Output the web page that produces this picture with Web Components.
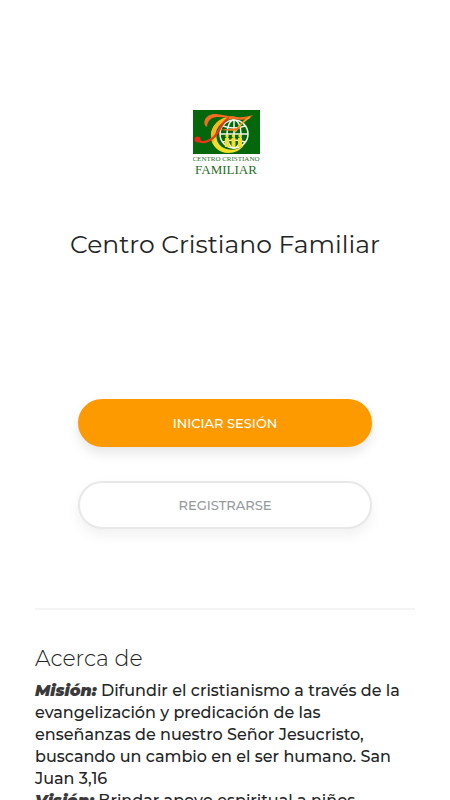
<!DOCTYPE html>
<html lang="es">
<head>
<meta charset="utf-8">
<meta name="viewport" content="width=device-width, initial-scale=1">
<title>Centro Cristiano Familiar</title>
<style>
body { margin: 0; background: #fff; color: #232526; font-family: Montserrat, Inter, "Open Sans", sans-serif; }
</style>
</head>
<body>
<welcome-page>
  <church-logo slot="logo"></church-logo>
  <span slot="title">Centro Cristiano Familiar</span>
  <pill-button slot="actions" variant="primary">INICIAR SESIÓN</pill-button>
  <pill-button slot="actions">REGISTRARSE</pill-button>
  <about-section>
    <span slot="heading">Acerca de</span>
    <about-entry label="Misión:">Difundir el cristianismo a través de la evangelización y predicación de las enseñanzas de nuestro Señor Jesucristo, buscando un cambio en el ser humano. San Juan 3,16</about-entry>
    <about-entry label="Visión:">Brindar apoyo espiritual a niños,</about-entry>
  </about-section>
</welcome-page>
<script>
const define = (name, html) => customElements.define(name, class extends HTMLElement {
  constructor() {
    super();
    this.attachShadow({ mode: "open" }).innerHTML = html;
  }
  connectedCallback() {
    const label = this.shadowRoot.querySelector("[data-label]");
    if (label) label.textContent = this.getAttribute("label");
  }
});

define("church-logo", `
<style>
:host { display: block; width: 67px; padding-left: 3px; }
svg { display: block; width: 100%; }
text { font-family: "Liberation Serif", serif; text-anchor: middle; fill: #1f701f; }
</style>
<svg viewBox="0 0 67 67" role="img" aria-label="Centro Cristiano Familiar">
  <rect width="67" height="44" fill="#04670b"/>
  <g fill="none" stroke="#f2f7ec" stroke-width="1.5">
    <circle cx="41" cy="24" r="14"/>
    <ellipse cx="41" cy="24" rx="7" ry="14"/>
    <path d="M41 10v28M27 24h28M30 16q11 4 22 0M30 32q11-4 22 0"/>
  </g>
  <path d="M43 7C29 5 18 14 18 26c0 10 8 17 17 17 7 0 13-3 16-8-6 5-14 6-20 3-13-6-9-27 12-31z" fill="#f4df28"/>
  <path d="M43 7C29 5 18 14 18 26c0 3 1 6 2 8 1-13 9-23 23-27z" fill="#fbb51c"/>
  <path d="M39 9C29 12 23 20 23 29c-2-9 4-18 16-20z" fill="#04670b"/>
  <g fill="#f8df22">
    <circle cx="34" cy="26" r="1.7"/><path d="M32 28h4v9h-4z"/>
    <circle cx="40.5" cy="26" r="1.7"/><path d="M38.500 28h4v9h-4z"/>
    <circle cx="47" cy="26" r="1.7"/><path d="M45 28h4v9h-4z"/>
  </g>
  <path d="M14 17C8 13 13 3 23 4c10 1 22 6 37 1-5 6-14 5-20 4C30 7 15 3 14 17z" fill="#f36b20"/>
  <path d="M36 8C29 11 27 21 21 27c-5 5-13 7-16 3" fill="none" stroke="#e63b19" stroke-width="2.4"/>
  <path d="M57 7C50 11 46 16 42 22" fill="none" stroke="#f9a51f" stroke-width="1.8"/>
  <path d="M28 20c7-2 14 0 20-4-2 6-11 5-20 4z" fill="#f47a20"/>
  <circle cx="4.500" cy="29.500" r="3" fill="#ed2419"/>
  <text x="33" y="51" font-size="7">CENTRO CRISTIANO</text>
  <text x="33" y="64" font-size="13">FAMILIAR</text>
</svg>`);

define("pill-button", `
<style>
:host { display: block; }
button {
  box-sizing: border-box; display: block; width: 100%; min-height: 48px; padding: 12px 24px;
  border: 2px solid #e8e8e8; border-radius: 24px; background: #fff; color: #969a9d;
  font: 500 13px/20px Montserrat, Inter, sans-serif; box-shadow: 0 6px 14px #0000000f; cursor: pointer;
}
:host([variant="primary"]) button {
  border-color: #fc9a00; background: #fc9a00; color: #fff; box-shadow: 0 6px 12px #0000001a;
}
</style>
<button type="button"><slot></slot></button>`);

define("about-entry", `
<style>
:host { display: block; font-size: 16px; line-height: 22px; font-weight: 500; }
em { font-weight: 900; color: #3a3a3a; }
</style>
<em data-label></em> <slot></slot>`);

define("about-section", `
<style>
:host { display: block; border-top: 2px solid #f4f4f5; padding: 34px 0 24px; }
h2 { margin: 0 0 6px; font-size: 22px; line-height: 30px; font-weight: 300; }
</style>
<h2><slot name="heading"></slot></h2>
<slot></slot>`);

define("welcome-page", `
<style>
:host { display: block; padding: 110px 35px 0; }
header { display: flex; flex-direction: column; align-items: center; gap: 49px; }
h1 { margin: 0; font-size: 25px; line-height: 36px; font-weight: 400; text-align: center; }
nav { display: grid; gap: 34px; margin: 137px 43px 79px; }
</style>
<header>
  <slot name="logo"></slot>
  <h1><slot name="title"></slot></h1>
</header>
<nav><slot name="actions"></slot></nav>
<slot></slot>`);
</script>
</body>
</html>
